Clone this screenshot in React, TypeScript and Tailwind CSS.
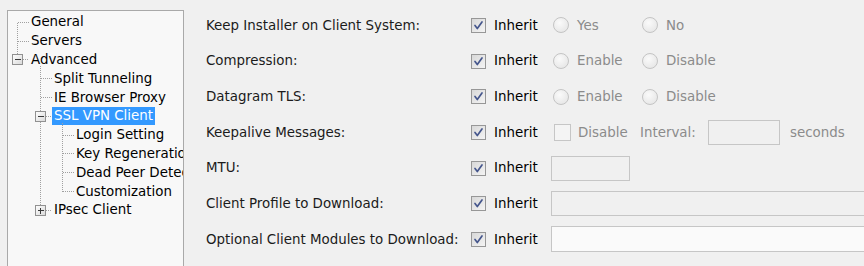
import React from "react";

type Node = { label: string; level: number; box?: "minus" | "plus"; selected?: boolean };

const tree: Node[] = [
  { label: "General", level: 0 },
  { label: "Servers", level: 0 },
  { label: "Advanced", level: 0, box: "minus" },
  { label: "Split Tunneling", level: 1 },
  { label: "IE Browser Proxy", level: 1 },
  { label: "SSL VPN Client", level: 1, box: "minus", selected: true },
  { label: "Login Setting", level: 2 },
  { label: "Key Regeneration", level: 2 },
  { label: "Dead Peer Detection", level: 2 },
  { label: "Customization", level: 2 },
  { label: "IPsec Client", level: 1, box: "plus" },
];

const ROW = 18.8;
const TOP = 1.8;
const cy = (i: number) => Math.floor(TOP + ROW * i + ROW / 2) + 0.5;
const LX = [9.5, 32.5, 54.5];
const TX = [21, 43.5, 66];

function TreeLines() {
  const lines: { x1: number; y1: number; x2: number; y2: number }[] = [];
  lines.push({ x1: LX[0], y1: cy(0), x2: LX[0], y2: cy(2) - 5 });
  lines.push({ x1: LX[0], y1: cy(0), x2: TX[0], y2: cy(0) });
  lines.push({ x1: LX[0], y1: cy(1), x2: TX[0], y2: cy(1) });
  lines.push({ x1: LX[0] + 5, y1: cy(2), x2: TX[0], y2: cy(2) });
  lines.push({ x1: LX[1], y1: cy(2) + 6, x2: LX[1], y2: cy(10) - 5 });
  [3, 4].forEach((i) => lines.push({ x1: LX[1], y1: cy(i), x2: TX[1], y2: cy(i) }));
  [5, 10].forEach((i) => lines.push({ x1: LX[1] + 5, y1: cy(i), x2: TX[1], y2: cy(i) }));
  lines.push({ x1: LX[2], y1: cy(5) + 6, x2: LX[2], y2: cy(9) });
  [6, 7, 8, 9].forEach((i) => lines.push({ x1: LX[2], y1: cy(i), x2: TX[2], y2: cy(i) }));

  const boxes = tree.map((n, i) => ({ n, i })).filter((b) => b.n.box);

  return (
    <svg className="absolute left-0 top-0 pointer-events-none" width="180" height="260" shapeRendering="crispEdges">
      <defs>
        <linearGradient id="bx" x1="0" y1="0" x2="1" y2="1">
          <stop offset="0" stopColor="#ffffff" />
          <stop offset="1" stopColor="#d9d9d9" />
        </linearGradient>
      </defs>
      {lines.map((l, k) => (
        <line key={k} x1={l.x1} y1={l.y1} x2={l.x2} y2={l.y2} stroke="#a0a0a0" strokeWidth="1" strokeDasharray="1 1" />
      ))}
      {boxes.map(({ n, i }) => {
        const x = LX[n.level];
        const y = cy(i);
        return (
          <g key={i}>
            <rect x={x - 5} y={y - 5} width="10" height="10" fill="url(#bx)" stroke="#919191" />
            <line x1={x - 3} y1={y} x2={x + 3} y2={y} stroke="#3a3a3a" />
            {n.box === "plus" && <line x1={x} y1={y - 3} x2={x} y2={y + 3} stroke="#3a3a3a" />}
          </g>
        );
      })}
    </svg>
  );
}

function Check() {
  return (
    <span className="w-[15px] h-[15px] shrink-0 border border-[#979797] bg-linear-to-br from-[#d8d8d8] to-[#f4f4f4] flex items-center justify-center">
      <svg width="13" height="13" viewBox="0 0 13 13">
        <path d="M3 6.5 L5.3 9.5 L10 3" fill="none" stroke="#45568c" strokeWidth="1.7" strokeLinecap="round" strokeLinejoin="round" />
      </svg>
    </span>
  );
}

function Radio({ label }: { label: string }) {
  return (
    <span className="flex items-center w-[89px] shrink-0">
      <span className="w-[16px] h-[16px] shrink-0 rounded-full border border-[#c4c4c4] bg-[radial-gradient(circle_at_40%_35%,#fafafa,#e2e2e2)]" />
      <span className="ml-[8px] text-[#8b8b8b]">{label}</span>
    </span>
  );
}

function Inherit() {
  return (
    <span className="flex items-center w-[80px] shrink-0">
      <Check />
      <span className="ml-[8px] text-black">Inherit</span>
    </span>
  );
}

function Row({ label, children }: { label: string; children?: React.ReactNode }) {
  return (
    <div className="h-[35.7px] flex items-center">
      <span className="w-[265px] shrink-0 text-[#1b1b1b]">{label}</span>
      <Inherit />
      {children}
    </div>
  );
}

export default function App() {
  return (
    <div
      className="w-[864px] h-[266px] overflow-hidden bg-[#f0f0f0] flex text-[13.4px] leading-none"
      style={{ fontFamily: '"DejaVu Sans", Verdana, sans-serif' }}
    >
      <div className="relative ml-[7px] mt-[10px] w-[177px] h-[270px] shrink-0 border border-[#a9a9a9] bg-[#f8f8f8] overflow-hidden">
        <TreeLines />
        <div className="pt-[1.8px]">
          {tree.map((n, i) => (
            <div
              key={i}
              className={
                "h-[18.8px] flex items-center whitespace-nowrap " +
                (n.level === 0 ? "pl-[21px]" : n.level === 1 ? "pl-[44px]" : "pl-[66px]")
              }
            >
              <span
                className={
                  "h-[18px] px-[2px] flex items-center " +
                  (n.selected ? "bg-[#3399ff] text-white" : "text-black")
                }
              >
                {n.label}
              </span>
            </div>
          ))}
        </div>
      </div>

      <div className="ml-[22px] pt-[7.5px] flex flex-col whitespace-nowrap">
        <Row label="Keep Installer on Client System:">
          <span className="ml-[2px] flex">
            <Radio label="Yes" />
            <Radio label="No" />
          </span>
        </Row>
        <Row label="Compression:">
          <span className="ml-[2px] flex">
            <Radio label="Enable" />
            <Radio label="Disable" />
          </span>
        </Row>
        <Row label="Datagram TLS:">
          <span className="ml-[2px] flex">
            <Radio label="Enable" />
            <Radio label="Disable" />
          </span>
        </Row>
        <Row label="Keepalive Messages:">
          <span className="flex items-center w-[89px] shrink-0">
            <span className="ml-[3px] w-[17px] h-[17px] shrink-0 border border-[#c6c6c6] bg-[#f4f4f4]" />
            <span className="ml-[7px] text-[#8b8b8b]">Disable</span>
          </span>
          <span className="w-[68px] shrink-0 text-[#8b8b8b]">Interval:</span>
          <span className="w-[72px] h-[25px] shrink-0 border border-[#c6c6c6] bg-[#f0f0f0]" />
          <span className="ml-[10px] text-[#8b8b8b]">seconds</span>
        </Row>
        <Row label="MTU:">
          <span className="w-[79px] h-[25px] shrink-0 border border-[#c6c6c6] bg-[#f0f0f0]" />
        </Row>
        <Row label="Client Profile to Download:">
          <span className="w-[340px] h-[25px] shrink-0 border border-[#c6c6c6] bg-[#f0f0f0]" />
        </Row>
        <Row label="Optional Client Modules to Download:">
          <span className="w-[340px] h-[26px] shrink-0 border border-[#c6c6c6] bg-[#fafafa]" />
        </Row>
      </div>
    </div>
  );
}
